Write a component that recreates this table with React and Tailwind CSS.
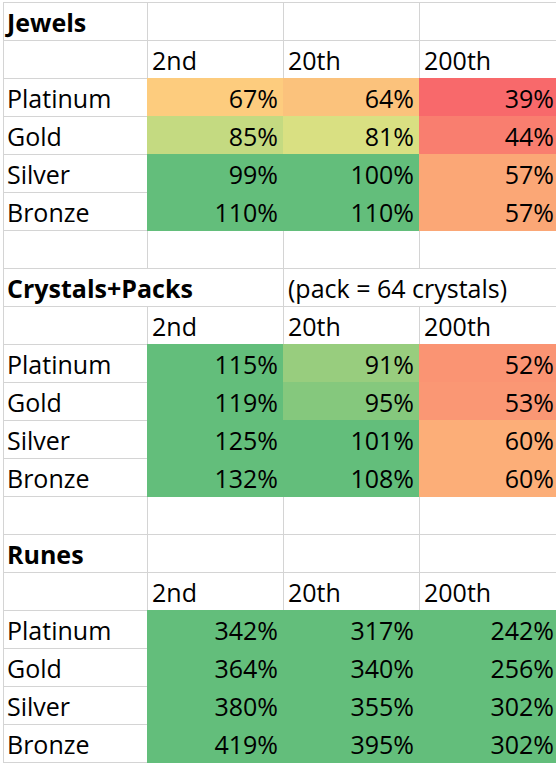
const FILL = {
  green: 'bg-[#63be7b] shadow-[0_0_0_1px_#63be7b]',
  o67: 'bg-[#fdcc7e] shadow-[0_0_0_1px_#fdcc7e]',
  o64: 'bg-[#fbc27c] shadow-[0_0_0_1px_#fbc27c]',
  r39: 'bg-[#f8696b] shadow-[0_0_0_1px_#f8696b]',
  y85: 'bg-[#c4da81] shadow-[0_0_0_1px_#c4da81]',
  y81: 'bg-[#d9e082] shadow-[0_0_0_1px_#d9e082]',
  r44: 'bg-[#f97e6f] shadow-[0_0_0_1px_#f97e6f]',
  o57: 'bg-[#fba776] shadow-[0_0_0_1px_#fba776]',
  g91: 'bg-[#98cd7e] shadow-[0_0_0_1px_#98cd7e]',
  g95: 'bg-[#85c87d] shadow-[0_0_0_1px_#85c87d]',
  r52: 'bg-[#fa9473] shadow-[0_0_0_1px_#fa9473]',
  r53: 'bg-[#fa9774] shadow-[0_0_0_1px_#fa9774]',
  o60: 'bg-[#fcae78] shadow-[0_0_0_1px_#fcae78]',
}

const SECTIONS = [
  {
    title: 'Jewels',
    rows: [
      ['Platinum', [67, 'o67'], [64, 'o64'], [39, 'r39']],
      ['Gold', [85, 'y85'], [81, 'y81'], [44, 'r44']],
      ['Silver', [99, 'green'], [100, 'green'], [57, 'o57']],
      ['Bronze', [110, 'green'], [110, 'green'], [57, 'o57']],
    ],
  },
  {
    title: 'Crystals+Packs',
    note: '(pack = 64 crystals)',
    rows: [
      ['Platinum', [115, 'green'], [91, 'g91'], [52, 'r52']],
      ['Gold', [119, 'green'], [95, 'g95'], [53, 'r53']],
      ['Silver', [125, 'green'], [101, 'green'], [60, 'o60']],
      ['Bronze', [132, 'green'], [108, 'green'], [60, 'o60']],
    ],
  },
  {
    title: 'Runes',
    rows: [
      ['Platinum', [342, 'green'], [317, 'green'], [242, 'green']],
      ['Gold', [364, 'green'], [340, 'green'], [256, 'green']],
      ['Silver', [380, 'green'], [355, 'green'], [302, 'green']],
      ['Bronze', [419, 'green'], [395, 'green'], [302, 'green']],
    ],
  },
]

const cell = 'h-[38px] border-b border-r border-[#d4d4d4] pt-px leading-[37px] whitespace-nowrap'

function Empty() {
  return <div className={`${cell} bg-white`} />
}

function Section({ section, last }) {
  const wide = section.title.length > 10
  return (
    <>
      {wide ? (
        <div className={`${cell} col-span-2 bg-white pl-[3px] font-bold`}>{section.title}</div>
      ) : (
        <>
          <div className={`${cell} bg-white pl-[3px] font-bold`}>{section.title}</div>
          <Empty />
        </>
      )}
      {section.note ? (
        <div className={`${cell} col-span-2 bg-white pl-[4px]`}>{section.note}</div>
      ) : (
        <>
          <Empty />
          <Empty />
        </>
      )}

      <Empty />
      {['2nd', '20th', '200th'].map((h) => (
        <div key={h} className={`${cell} bg-white pl-[4px]`}>{h}</div>
      ))}

      {section.rows.map(([label, ...vals]) => (
        <div key={label} className="contents">
          <div className={`${cell} bg-white pl-[3px]`}>{label}</div>
          {vals.map(([v, fill], i) => (
            <div key={i} className={`${cell} border-transparent pr-[5px] text-right ${FILL[fill]}`}>
              {v}%
            </div>
          ))}
        </div>
      ))}

      {!last && (
        <>
          <Empty />
          <Empty />
          <Empty />
          <Empty />
        </>
      )}
    </>
  )
}

export default function App() {
  return (
    <div className="w-[556px] h-[763px] overflow-hidden bg-white">
      <div
        className="mt-[2px] ml-[3px] grid grid-cols-[144px_136px_136px_140px] border-t border-l border-[#d4d4d4] text-[25px] text-black"
        style={{ fontFamily: '"Open Sans", sans-serif' }}
      >
        {SECTIONS.map((s, i) => (
          <Section key={s.title} section={s} last={i === SECTIONS.length - 1} />
        ))}
      </div>
    </div>
  )
}
